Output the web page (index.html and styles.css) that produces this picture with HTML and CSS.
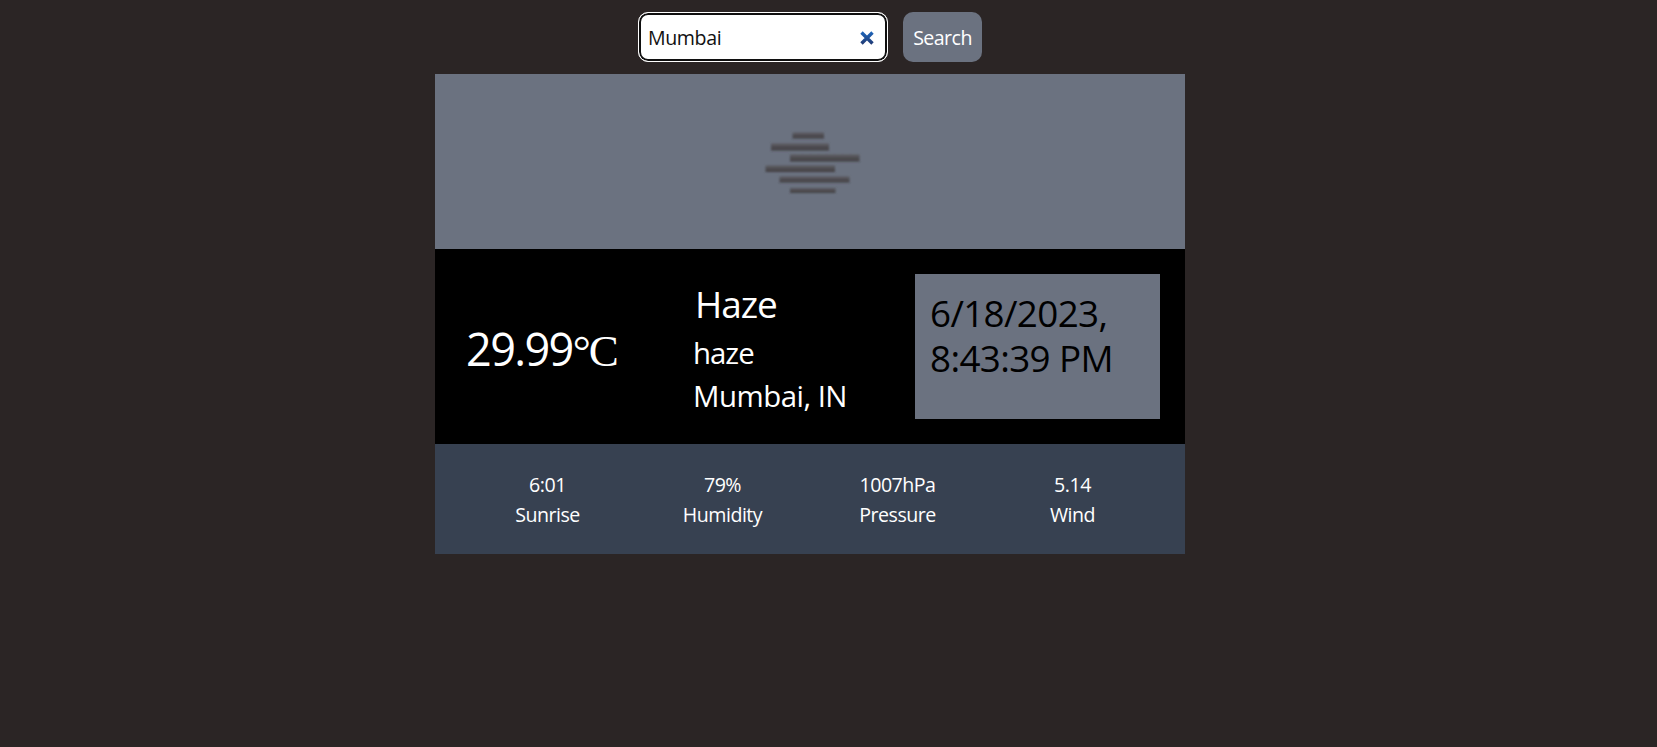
FILE: index.html
```html
<!DOCTYPE html>
<html lang="en">
<head>
<meta charset="utf-8">
<title>Weather</title>
<link rel="stylesheet" href="styles.css">
</head>
<body>
<main class="app">
  <form class="search">
    <label class="search-field">
      <input class="search-input" type="text" value="Mumbai">
      <svg class="clear" viewBox="0 0 14 14" width="14" height="14"><defs><linearGradient id="cross" gradientUnits="userSpaceOnUse" x1="0" y1="0" x2="0" y2="14"><stop offset="0" stop-color="#1f69c0"/><stop offset="1" stop-color="#20376f"/></linearGradient></defs><path d="M1.500 1.500L12.500 12.500M12.500 1.500L1.500 12.500" stroke="url(#cross)" stroke-width="3.400" fill="none"/></svg>
    </label>
    <button class="search-button" type="button">Search</button>
  </form>
  <section class="card">
    <div class="picture">
      <svg class="haze-icon" viewBox="0 0 100 66" width="100" height="66">
        <defs><linearGradient id="bar" x1="0" y1="0" x2="0" y2="1"><stop offset="0" stop-color="#5c5c62"/><stop offset="1" stop-color="#403d40"/></linearGradient>
        <filter id="soft" x="-5%" y="-5%" width="110%" height="110%"><feGaussianBlur stdDeviation="1"/></filter></defs>
        <g fill="url(#bar)" filter="url(#soft)">
          <rect x="29.500" y="2.500" width="31.500" height="6"/>
          <rect x="8" y="13.500" width="58" height="7"/>
          <rect x="27" y="24.500" width="69.500" height="7"/>
          <rect x="2.500" y="35.500" width="69.500" height="6.500"/>
          <rect x="16.500" y="46.500" width="70" height="6"/>
          <rect x="27" y="58" width="45.500" height="5"/>
        </g>
      </svg>
    </div>
    <div class="current">
      <div class="temperature"><span class="degrees">29.99</span><span class="unit">°C</span></div>
      <div class="condition">
        <div class="condition-name">Haze</div>
        <div class="condition-line detail">haze</div>
        <div class="condition-line">Mumbai, IN</div>
      </div>
      <div class="clock">6/18/2023,<br>8:43:39 PM</div>
    </div>
    <div class="stats">
      <div class="stat"><span>6:01</span><span>Sunrise</span></div>
      <div class="stat"><span>79%</span><span>Humidity</span></div>
      <div class="stat"><span>1007hPa</span><span>Pressure</span></div>
      <div class="stat"><span>5.14</span><span>Wind</span></div>
    </div>
  </section>
</main>
</body>
</html>
```
FILE: styles.css
```css
* { box-sizing: border-box; }
body {
  margin: 0;
  min-height: 747px;
  background: #2b2525;
  color: #fff;
  font-family: "Open Sans", "Noto Sans", sans-serif;
  font-size: 20px;
  line-height: 30px;
}
.app { width: 750px; margin-left: 435px; }
.search { display: flex; height: 74px; padding: 12px 0 0 203px; gap: 15px; }
.search-field {
  display: flex;
  align-items: center;
  width: 250px;
  height: 50px;
  padding: 0 11px 0 7px;
  border: 1px solid #fff;
  border-radius: 10px;
  background: #fff;
  box-shadow: inset 0 0 0 2px #101010;
}
.search-input {
  flex: 1;
  min-width: 0;
  padding: 2px 0 0 2px;
  border: 0;
  outline: 0;
  background: transparent;
  color: #111;
  font: inherit;
  font-size: 19.6px;
  letter-spacing: -0.4px;
}
.clear { flex: none; margin: 2px 2px 0 0; }
.search-button {
  width: 79px;
  height: 50px;
  padding: 2px 0 0;
  border: 0;
  border-radius: 10px;
  background: #6b7280;
  color: #fff;
  font: inherit;
  font-size: 19.6px;
  letter-spacing: -0.55px;
}
.picture { height: 175px; padding: 56px 0 0 328px; background: #6b7280; }
.haze-icon { display: block; }
.current {
  display: grid;
  grid-template-columns: 233px 222px 245px;
  height: 195px;
  padding: 25px;
  background: #000;
}
.temperature { padding: 52px 0 0 6px; font-size: 45px; line-height: 45px; white-space: nowrap; }
.degrees { letter-spacing: -1.6px; }
.unit { font-family: "Liberation Serif", serif; letter-spacing: -2px; }
.condition { padding-top: 7px; white-space: nowrap; }
.condition-name { margin-bottom: 6px; padding-left: 2px; font-size: 37px; line-height: 45px; letter-spacing: -1.1px; }
.condition-line { font-size: 29.4px; line-height: 43px; letter-spacing: -0.5px; }
.detail { letter-spacing: -1px; }
.clock { padding: 17px 15px 0; background: #6b7280; color: #000; font-size: 36.8px; line-height: 45px; letter-spacing: -0.65px; }
.stats {
  display: grid;
  grid-template-columns: repeat(4, 175px);
  height: 110px;
  padding: 26px 25px 24px;
  background: #374151;
}
.stat { display: flex; flex-direction: column; align-items: center; font-size: 19.6px; letter-spacing: -0.5px; }
```
